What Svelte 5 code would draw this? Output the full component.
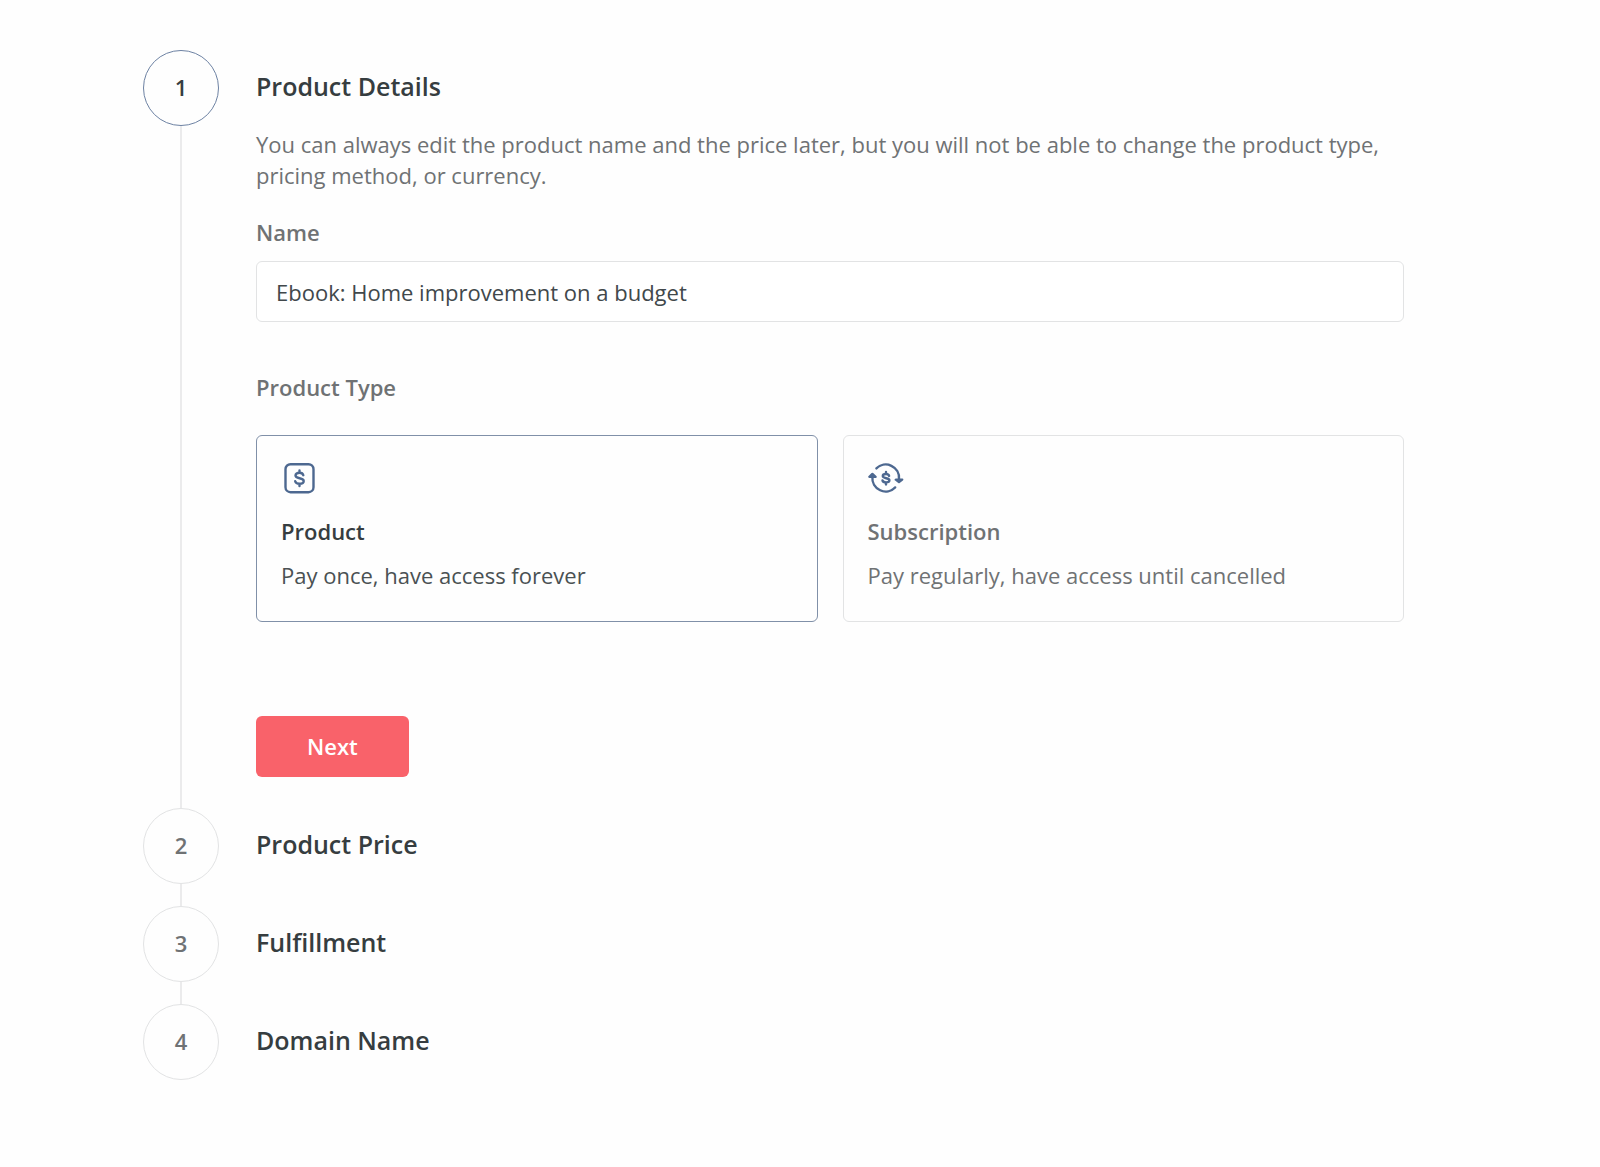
<script>
  let name = 'Ebook: Home improvement on a budget';
  let type = 'product';
  let current = 1;

  const steps = ['Product Details', 'Product Price', 'Fulfillment', 'Domain Name'];

  const types = [
    { id: 'product', title: 'Product', text: 'Pay once, have access forever' },
    { id: 'subscription', title: 'Subscription', text: 'Pay regularly, have access until cancelled' }
  ];
</script>

<main>
  <ol class="steps">
    {#each steps as step, i}
      <li class="step" class:active={current === i + 1}>
        <div class="marker">
          <span class="number">{i + 1}</span>
          {#if i < steps.length - 1}
            <span class="line"></span>
          {/if}
        </div>
        <div class="body">
          <h2>{step}</h2>
          {#if i === 0}
            <form on:submit|preventDefault>
              <p class="intro">
                You can always edit the product name and the price later, but you will not be able to change the product type, pricing method, or currency.
              </p>

              <label class="label" for="name">Name</label>
              <input class="field" id="name" type="text" bind:value={name} />

              <fieldset>
                <legend class="label">Product Type</legend>
                <div class="types">
                  {#each types as t}
                    <label class="type" class:selected={type === t.id}>
                      <input type="radio" name="type" value={t.id} bind:group={type} />
                      <svg class="icon" viewBox="0 0 36 36" aria-hidden="true">
                        {#if t.id === 'product'}
                          <rect x="4.5" y="3.2" width="28" height="28" rx="5" />
                          <path d="M22.3 14.2C21.9 12.5 20.5 11.7 18.5 11.7C16.1 11.7 14.5 12.8 14.5 14.5C14.5 18.3 22.7 16.2 22.7 20C22.7 21.7 21 22.7 18.5 22.7C16.1 22.7 14.6 21.8 14.2 20.2M18.5 9.4V11.7M18.5 22.7V25" />
                        {:else}
                          <path d="M8.4 7.4A13.3 13.3 0 0 1 31 18M27.2 26.4A13.3 13.3 0 0 1 4.4 16" />
                          <path class="head" d="M27.8 18.6H34.2L31 21ZM1.4 15.8H7.6L4.4 13Z" />
                          <path d="M21.1 14.9C20.7 13.6 19.6 13 18 13C16 13 14.8 13.8 14.8 15.1C14.8 18 21.4 16.6 21.4 19.3C21.4 20.7 20 21.4 18 21.4C16.1 21.4 14.9 20.7 14.5 19.5M18 11V13M18 21.4V23.4" />
                        {/if}
                      </svg>
                      <strong>{t.title}</strong>
                      <span class="text">{t.text}</span>
                    </label>
                  {/each}
                </div>
              </fieldset>

              <button class="next" type="submit">Next</button>
            </form>
          {/if}
        </div>
      </li>
    {/each}
  </ol>
</main>

<style>
:global(body) {
  margin: 0;
  background-color: #fefefe;
}
main {
  padding: 50px 196px 50px 143px;
  font-family: 'Open Sans', sans-serif;
  font-size: 22px;
  line-height: 31px;
  color: #6f7274;
}
.steps {
  list-style: none;
  margin: 0;
  padding: 0;
}
.step {
  display: flex;
  gap: 37px;
}
.marker {
  display: flex;
  flex-direction: column;
  align-items: center;
  flex: none;
}
.number {
  box-sizing: border-box;
  width: 76px;
  height: 76px;
  padding-bottom: 2px;
  border: 1px solid #e2e3e4;
  border-radius: 50%;
  display: flex;
  justify-content: center;
  align-items: center;
  font-weight: 600;
}
.active .number {
  border-color: #6d82a3;
  color: #363d40;
}
.line {
  flex: 1;
  min-height: 22px;
  width: 2px;
  background-color: #ebebec;
}
.body {
  flex: 1;
  min-width: 0;
}
h2 {
  margin: 0;
  color: #363d40;
  font-size: 25px;
  font-weight: 600;
  line-height: 72px;
}
.intro {
  margin: 7px 0 26px;
}
.label {
  display: block;
  padding: 0;
  font-weight: 600;
}
.field {
  box-sizing: border-box;
  width: 100%;
  height: 61px;
  margin: 13px 0 50px;
  padding: 0 19px;
  border: 1px solid #e2e3e4;
  border-radius: 6px;
  background-color: #fff;
  color: #41484b;
  font: inherit;
}
fieldset {
  margin: 0 0 94px;
  padding: 0;
  border: 0;
  min-width: 0;
}
legend {
  margin-bottom: 32px;
}
.types {
  display: grid;
  grid-template-columns: 1fr 1fr;
  gap: 25px;
}
.type {
  display: flex;
  flex-direction: column;
  padding: 25px 24px 30px;
  border: 1px solid #e2e3e4;
  border-radius: 6px;
  cursor: pointer;
}
.type input {
  position: absolute;
  opacity: 0;
}
.type.selected {
  border-color: #8090a8;
  color: #363d40;
}
.selected .text {
  color: #4a5153;
}
.icon {
  width: 36px;
  height: 36px;
  margin-bottom: 19px;
  fill: none;
  stroke: #4d6890;
  stroke-width: 2.4;
  stroke-linecap: round;
  stroke-linejoin: round;
}
.icon .head {
  fill: #4d6890;
}
strong {
  margin-bottom: 13px;
  font-weight: 600;
}
.next {
  display: block;
  height: 61px;
  margin-bottom: 31px;
  padding: 0 51px;
  border: 0;
  border-radius: 6px;
  background-color: #f9626a;
  color: #fff;
  font: inherit;
  font-weight: 600;
  cursor: pointer;
}
</style>
